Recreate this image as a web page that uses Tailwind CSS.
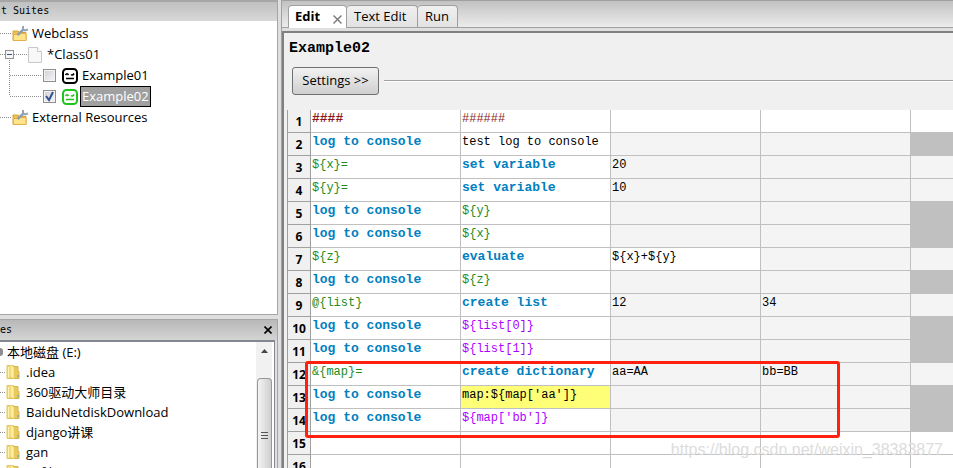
<!DOCTYPE html>
<html lang="en">
<head>
    <meta charset="UTF-8">
    <meta name="viewport" content="width=device-width, initial-scale=1.0">
    <title>RIDE - Example02</title>
    <script src="https://cdn.jsdelivr.net/npm/@tailwindcss/browser@4"></script>
</head>
<body class="flex h-screen overflow-hidden bg-[#dfdfdf] text-black text-[13px] font-['Open_Sans','Noto_Sans_CJK_SC',sans-serif]">
    <!-- Shared icons -->
    <svg class="hidden">
        <symbol id="suite" viewBox="0 0 17 17">
            <path d="M1 6h5l1.500 1.500H14V15.500H1z" fill="#f0c04a" stroke="#d9a23a"/>
            <path d="M1.500 15.500V9.500H8l1-1h5v7z" fill="#ffe48a" stroke="#e3b04a"/>
            <path d="M5.500 10L12 4" stroke="#8ba0b8" stroke-width="2.400"/>
            <path d="M11 1v3l2 1.500 3-1" fill="none" stroke="#97a5b3" stroke-width="2"/>
        </symbol>
        <symbol id="folder" viewBox="0 0 14 16">
            <path d="M1 1.500h6.500v13H1z" fill="#f3d978" stroke="#e2c465"/>
            <path d="M7 2.500h5v5h1v7H5z" fill="#e9ca5f" stroke="#d6b54c"/>
            <path d="M5 1.500l2.500 1.500v11.500L5 13z" fill="#fff0a6" stroke="#f6e08a" stroke-width=".8"/>
            <path d="M2.500 3v10" stroke="#fff3b8"/>
            <path d="M12 11v2.500" stroke="#57a0c9"/>
        </symbol>
        <symbol id="robot" viewBox="0 0 16 16">
            <rect x="1" y="1" width="14" height="14" rx="3.500" fill="#fff" stroke="currentColor" stroke-width="2"/>
            <path d="M3.500 7q1.500-2.500 3 0M9 6.500q1.500 1.500 3-1M4 10.500h8" fill="none" stroke="currentColor" stroke-width="1.600"/>
        </symbol>
    </svg>

    <!-- Left side -->
    <aside class="flex w-[278px] shrink-0 flex-col gap-1">
        <section class="flex h-[315px] shrink-0 flex-col border-t-2 border-r border-b border-[#a6a6a6]">
            <h2 class="h-[19px] bg-linear-to-b from-[#c0c0c0] to-[#d8d8d8] pl-px font-['DejaVu_Sans_Mono',monospace] text-[10px] leading-[17px]">t Suites</h2>
            <div class="relative flex-1 bg-white pt-[2px]">
                <!-- Connector lines -->
                <svg class="absolute top-0 left-0 h-[110px] w-12" fill="none" stroke="#909090" stroke-dasharray="1 1">
                    <path d="M0 12.500h12M0 33.500h5M14 33.500h13M9.500 39v36M10 54.500h32M10 75.500h32M0 96.500h12"/>
                </svg>
                <ul class="relative leading-[21px]">
                    <li class="flex h-[21px] items-center pl-3">
                        <svg class="mr-[3px] size-[17px]"><use href="#suite"/></svg>Webclass
                    </li>
                    <li class="flex h-[21px] items-center pl-[5px]">
                        <button class="flex size-[9px] items-center justify-center border border-[#919191] bg-[#f6f6f6]" aria-label="Collapse"><span class="h-px w-[5px] bg-[#33518f]"></span></button>
                        <svg class="mr-[5px] ml-3.5 h-4 w-[14px]" viewBox="0 0 14 16"><path d="M.5.500h9l4 4v11H.5z" fill="#f8f8f8" stroke="#c9c9c9"/><path d="M9.500.500v4h4" fill="#fff" stroke="#c9c9c9"/></svg>*Class01
                    </li>
                    <li class="flex h-[21px] items-center pl-[43px]">
                        <input id="ex1" type="checkbox" class="size-[13px] appearance-none border border-[#8e8f8f] bg-linear-to-br from-[#cfd2d6] to-[#f6f6f6] outline-1 -outline-offset-2 outline-[#f4f4f4]">
                        <svg class="ml-1.5 size-4"><use href="#robot"/></svg>
                        <label for="ex1" class="pl-1">Example01</label>
                    </li>
                    <li class="flex h-[21px] items-center pl-[43px]">
                        <span class="relative flex">
                            <input id="ex2" type="checkbox" checked class="size-[13px] appearance-none border border-[#8e8f8f] bg-linear-to-br from-[#cfd2d6] to-[#f6f6f6] outline-1 -outline-offset-2 outline-[#f4f4f4]">
                            <svg class="pointer-events-none absolute inset-0 size-[13px]"><path d="M3 6l3 4 4-8" fill="none" stroke="#37508f" stroke-width="2"/></svg>
                        </span>
                        <svg class="ml-1.5 size-4 text-[#1fc41f]"><use href="#robot"/></svg>
                        <label for="ex2" class="ml-0.5 h-[21px] border border-black bg-[#a0a0a0] px-px leading-[19px] text-white">Example02</label>
                    </li>
                    <li class="flex h-[21px] items-center pl-3">
                        <svg class="mr-[3px] size-[17px]"><use href="#suite"/></svg>External Resources
                    </li>
                </ul>
            </div>
        </section>

        <section class="flex min-h-0 flex-1 flex-col border-t border-r border-[#a6a6a6]">
            <div class="flex h-5 shrink-0 items-center justify-between bg-linear-to-b from-[#b8b8b8] to-[#d4d4d4] pr-[5px]">
                <h2 class="font-['DejaVu_Sans_Mono',monospace] text-[10px] leading-4">es</h2>
                <button aria-label="Close"><svg class="size-2" stroke="#000" stroke-width="1.600"><path d="M.5.500l7 7M7.500.500l-7 7"/></svg></button>
            </div>
            <div class="mr-0.5 flex min-h-0 flex-1 border-t-2 border-r border-[#828790] bg-white">
                <ul class="min-w-0 flex-1 leading-5 [&>li]:flex [&>li]:h-5 [&>li]:items-center [&_svg]:mr-1.5 [&_svg]:h-4 [&_svg]:w-[14px] [&_i]:mr-px [&_i]:w-[5px] [&_i]:border-t [&_i]:border-dotted [&_i]:border-[#909090]">
                    <li><span class="mr-1 h-2 w-[3px] rounded-r-sm bg-[#8d8d8d]"></span>本地磁盘 (E:)</li>
                    <li><i></i><svg><use href="#folder"/></svg>.idea</li>
                    <li><i></i><svg><use href="#folder"/></svg>360驱动大师目录</li>
                    <li><i></i><svg><use href="#folder"/></svg>BaiduNetdiskDownload</li>
                    <li><i></i><svg><use href="#folder"/></svg>django讲课</li>
                    <li><i></i><svg><use href="#folder"/></svg>gan</li>
                    <li><i></i><svg><use href="#folder"/></svg>gitfile</li>
                </ul>
                <!-- Scrollbar -->
                <div class="mr-0.5 flex w-4 flex-col items-center bg-[#f1f1f1]">
                    <svg class="mt-[7px] h-1 w-[7px] shrink-0"><path d="M3.500 0L7 4H0z" fill="#444"/></svg>
                    <div class="mt-[25px] flex w-[15px] flex-1 flex-col items-center gap-0.5 rounded-t-sm border border-b-0 border-[#979797] bg-linear-to-r from-[#f4f4f4] to-[#cfcfcf] pt-[53px]">
                        <span class="h-px w-[7px] bg-[#555]"></span>
                        <span class="h-px w-[7px] bg-[#555]"></span>
                        <span class="h-px w-[7px] bg-[#555]"></span>
                    </div>
                </div>
            </div>
        </section>
    </aside>

    <!-- Editor notebook -->
    <main class="ml-[3px] flex min-w-0 flex-1 flex-col border-t border-l border-[#a0a0a0]">
        <div class="flex h-[27px] shrink-0 items-end border-b border-[#a0a0a0] bg-linear-to-b from-[#c2c2c2] to-[#ececec] pl-[6px]">
            <button class="-mb-px flex h-[23px] w-[59px] items-center justify-between rounded-t-sm border border-b-0 border-[#a0a0a0] bg-white pr-1 pl-1.5 font-bold">Edit
                <svg class="mt-1 size-[9px]" stroke="#777" stroke-width="1.400"><path d="M.5.500l8 8M8.500.500l-8 8"/></svg>
            </button>
            <button class="h-[22px] w-[71px] rounded-t-sm border-t border-r border-[#a0a0a0] bg-linear-to-b from-[#f0f0f0] to-[#e2e2e2] pl-[7px] text-left">Text Edit</button>
            <button class="h-[22px] w-10 rounded-t-sm border-t border-r border-[#a0a0a0] bg-linear-to-b from-[#f0f0f0] to-[#e2e2e2] pl-[7px] text-left">Run</button>
        </div>
        <div class="mt-[3px] flex min-h-0 flex-1 flex-col border-t-2 border-l-2 border-[#808080] bg-[#f0f0f0]">
            <h1 class="mt-1.5 pl-[5px] font-['Liberation_Mono',monospace] text-[15px] leading-5 font-bold">Example02</h1>
            <div class="mt-2 mb-[15px] flex items-center gap-[5px] pl-2">
                <button class="h-7 w-[87px] rounded-[3px] border border-[#707070] bg-linear-to-b from-[#f2f2f2] to-[#cfcfcf]">Settings &gt;&gt;</button>
                <hr class="h-0.5 flex-1 border-t border-b border-t-[#a0a0a0] border-b-white">
            </div>
            <!-- Test steps -->
            <div class="relative ml-[3px] min-h-0 flex-1 border-l border-[#a0a0a0] bg-white">
                <table class="w-full table-fixed border-separate border-spacing-0 font-['Liberation_Mono',monospace] text-[12px] [&_td]:border-r [&_td]:border-b [&_td]:border-[#c0c0c0] [&_td:last-child]:border-r-0 [&_td]:pt-px [&_td]:pl-px [&_td]:align-top [&_td]:leading-4 [&_td]:whitespace-pre [&_th]:border-r [&_th]:border-b [&_th]:border-[#a0a0a0] [&_th]:bg-[#f0f0f0] [&_th]:pt-px [&_th]:font-['Open_Sans',sans-serif] [&_th]:leading-[20px] [&_tr]:h-[23px] [&_b]:text-[13px]">
                    <colgroup><col class="w-[23px]"><col class="w-[150px]"><col class="w-[150px]"><col class="w-[150px]"><col class="w-[150px]"><col></colgroup>
                    <tbody>
                        <tr><th>1</th><td class="text-[#8b1a1a]"><b>####</b></td><td class="text-[#8b1a1a]">######</td><td></td><td></td><td></td></tr>
                        <tr><th>2</th><td class="text-[#0080c0]"><b>log to console</b></td><td>test log to console</td><td class="bg-[#f4f4f4]"></td><td class="bg-[#f4f4f4]"></td><td class="bg-[#c0c0c0]"></td></tr>
                        <tr><th>3</th><td class="text-[#228b22]">${x}=</td><td class="text-[#0080c0]"><b>set variable</b></td><td class="bg-[#f4f4f4]">20</td><td class="bg-[#f4f4f4]"></td><td class="bg-[#f4f4f4]"></td></tr>
                        <tr><th>4</th><td class="text-[#228b22]">${y}=</td><td class="text-[#0080c0]"><b>set variable</b></td><td class="bg-[#f4f4f4]">10</td><td class="bg-[#f4f4f4]"></td><td class="bg-[#f4f4f4]"></td></tr>
                        <tr><th>5</th><td class="text-[#0080c0]"><b>log to console</b></td><td class="text-[#228b22]">${y}</td><td class="bg-[#f4f4f4]"></td><td class="bg-[#f4f4f4]"></td><td class="bg-[#c0c0c0]"></td></tr>
                        <tr><th>6</th><td class="text-[#0080c0]"><b>log to console</b></td><td class="text-[#228b22]">${x}</td><td class="bg-[#f4f4f4]"></td><td class="bg-[#f4f4f4]"></td><td class="bg-[#c0c0c0]"></td></tr>
                        <tr><th>7</th><td class="text-[#228b22]">${z}</td><td class="text-[#0080c0]"><b>evaluate</b></td><td>${x}+${y}</td><td class="bg-[#f4f4f4]"></td><td class="bg-[#f4f4f4]"></td></tr>
                        <tr><th>8</th><td class="text-[#0080c0]"><b>log to console</b></td><td class="text-[#228b22]">${z}</td><td class="bg-[#f4f4f4]"></td><td class="bg-[#f4f4f4]"></td><td class="bg-[#c0c0c0]"></td></tr>
                        <tr><th>9</th><td class="text-[#228b22]">@{list}</td><td class="text-[#0080c0]"><b>create list</b></td><td class="bg-[#f4f4f4]">12</td><td class="bg-[#f4f4f4]">34</td><td class="bg-[#f4f4f4]"></td></tr>
                        <tr><th>10</th><td class="text-[#0080c0]"><b>log to console</b></td><td class="text-[#b000ff]">${list[0]}</td><td class="bg-[#f4f4f4]"></td><td class="bg-[#f4f4f4]"></td><td class="bg-[#c0c0c0]"></td></tr>
                        <tr><th>11</th><td class="text-[#0080c0]"><b>log to console</b></td><td class="text-[#b000ff]">${list[1]}</td><td class="bg-[#f4f4f4]"></td><td class="bg-[#f4f4f4]"></td><td class="bg-[#c0c0c0]"></td></tr>
                        <tr><th>12</th><td class="text-[#228b22]">&amp;{map}=</td><td class="text-[#0080c0]"><b>create dictionary</b></td><td class="bg-[#f4f4f4]">aa=AA</td><td class="bg-[#f4f4f4]">bb=BB</td><td class="bg-[#f4f4f4]"></td></tr>
                        <tr><th>13</th><td class="text-[#0080c0]"><b>log to console</b></td><td class="bg-[#ffff77]">map:${map['aa']}</td><td class="bg-[#f4f4f4]"></td><td class="bg-[#f4f4f4]"></td><td class="bg-[#c0c0c0]"></td></tr>
                        <tr><th>14</th><td class="text-[#0080c0]"><b>log to console</b></td><td class="text-[#b000ff]">${map['bb']}</td><td class="bg-[#f4f4f4]"></td><td class="bg-[#f4f4f4]"></td><td class="bg-[#c0c0c0]"></td></tr>
                        <tr><th>15</th><td></td><td></td><td></td><td></td><td></td></tr>
                        <tr><th>16</th><td></td><td></td><td></td><td></td><td></td></tr>
                    </tbody>
                </table>
                <!-- Highlight round the map steps -->
                <div class="pointer-events-none absolute top-[251px] left-[17px] h-[77px] w-[535px] rounded-[3px] border-3 border-[#ff2010]"></div>
                <p class="pointer-events-none absolute top-[328px] right-2.5 font-['Liberation_Sans',sans-serif] text-[16px] leading-6 text-[#dcdcdc]">https://blog.csdn.net/weixin_38383877</p>
            </div>
        </div>
    </main>
</body>
</html>
